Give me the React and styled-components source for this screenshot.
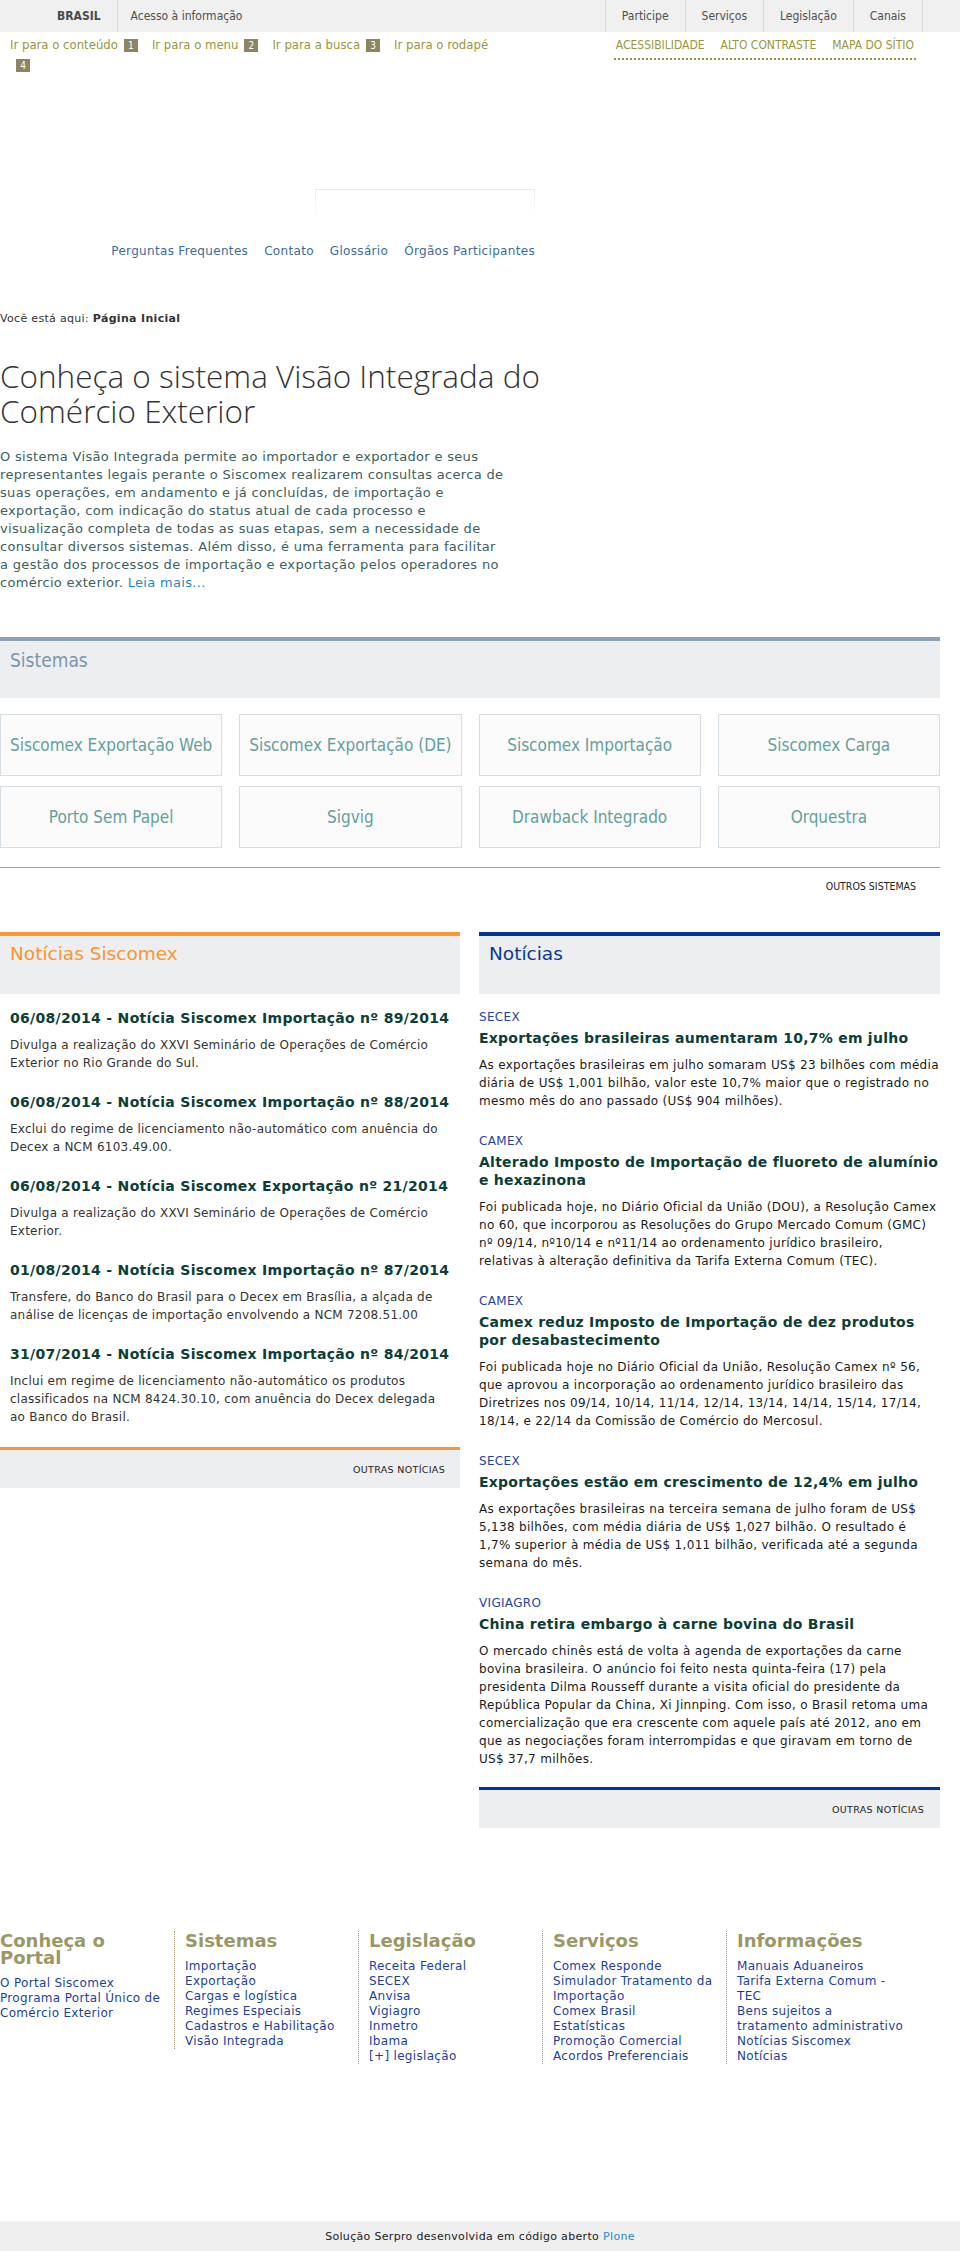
import React from 'react';
import styled, { createGlobalStyle } from 'styled-components';

const narrow = `"Liberation Sans Narrow", "DejaVu Sans Condensed", "Arial Narrow", sans-serif`;
const sans = `"DejaVu Sans", Verdana, sans-serif`;

const GlobalStyle = createGlobalStyle`
  html, body {
    margin: 0;
    padding: 0;
  }
  body {
    font-family: ${sans};
    letter-spacing: 0.02em;
    color: #333;
    background: #fff;
  }
  a {
    text-decoration: none;
  }
`;

const Page = styled.div`
  min-height: 100vh;
  display: flex;
  flex-direction: column;
`;

// barra do governo
const TopBar = styled.div`
  background: #f0f0f0;
  height: 32px;
  display: flex;
  justify-content: space-between;
  padding: 0 37px 0 41px;
  font-family: ${narrow};
  font-size: 12px;
  letter-spacing: 0;
`;

const BarGroup = styled.div`
  display: flex;
`;

const BarItem = styled.a`
  display: flex;
  align-items: center;
  padding: 0 ${(p) => p.$pad || 16}px;
  color: ${(p) => (p.$bold ? '#4a4a4a' : '#4f4f4f')};
  font-weight: ${(p) => (p.$bold ? 'bold' : 'normal')};
  border-left: ${(p) => (p.$sep ? '1px solid #dadada' : '0')};
  border-right: ${(p) => (p.$end ? '1px solid #dadada' : '0')};
`;

const Container = styled.div`
  width: 940px;
`;

const SkipRow = styled.div`
  height: 44px;
  display: flex;
  justify-content: space-between;
  align-items: flex-start;
  padding: 3px 24px 0 10px;
  box-sizing: border-box;
  font-family: ${narrow};
  letter-spacing: 0;
`;

const SkipLinks = styled.div`
  max-width: 490px;
  font-size: 13px;
  line-height: 20px;
`;

const SkipLink = styled.a`
  color: #96963c;
`;

const SkipNum = styled.span`
  display: inline-block;
  width: 14px;
  height: 13px;
  line-height: 13px;
  margin: 0 14px 0 6px;
  background: #8e8461;
  color: #fff;
  font-size: 10px;
  text-align: center;
  vertical-align: middle;
`;

const AccessLinks = styled.div`
  display: flex;
  gap: 16px;
  padding: 2px 2px 5px;
  border-bottom: 2px dotted #96963c;
  font-size: 12px;
  line-height: 16px;
`;

const AccessLink = styled.a`
  color: #96963c;
`;

const Header = styled.div`
  width: 535px;
  padding-top: 113px;
  display: flex;
  flex-direction: column;
  align-items: flex-end;
`;

const SearchBox = styled.div`
  width: 218px;
  height: 24px;
  border: 1px solid;
  border-bottom: 0;
  border-image: linear-gradient(#e9e9e9, #ffffff) 1;
`;

const HeaderNav = styled.nav`
  margin-top: 29px;
  display: flex;
  gap: 16px;
  font-size: 12px;
  line-height: 16px;
`;

const HeaderLink = styled.a`
  color: #3b6aa0;
`;

const Breadcrumb = styled.div`
  margin-top: 52px;
  font-size: 11px;
  line-height: 16px;
  color: #333;

  strong {
    font-weight: bold;
  }
`;

const Intro = styled.section`
  width: 560px;
`;

const Title = styled.h1`
  margin: 31px 0 0;
  font-family: "Open Sans", "Lato", sans-serif;
  font-weight: 300;
  font-size: 31.5px;
  line-height: 35px;
  letter-spacing: 0;
  color: #333;
`;

const Lead = styled.p`
  width: 505px;
  margin: 20px 0 0;
  font-size: 13px;
  line-height: 18px;
  color: #3b605e;

  a {
    color: #1f87c9;
  }
`;

const Systems = styled.section`
  margin-top: 45px;
`;

const PanelHead = styled.div`
  border-top: 4px solid ${(p) => p.$color};
  background: #eceef0;
  height: ${(p) => p.$h || 57}px;
  padding: 0 10px;
`;

const PanelTitle = styled.h2`
  margin: 0;
  padding-top: ${(p) => p.$top || 8}px;
  font-family: ${(p) => (p.$narrow ? narrow : sans)};
  font-weight: normal;
  font-size: ${(p) => p.$size || 18.5}px;
  line-height: 22px;
  letter-spacing: 0;
  color: ${(p) => p.$color};
`;

const SystemGrid = styled.div`
  margin-top: 16px;
  display: grid;
  grid-template-columns: repeat(4, 1fr);
  column-gap: 17px;
  row-gap: 10px;
`;

const SystemBox = styled.a`
  height: 62px;
  box-sizing: border-box;
  border: 1px solid #d6dde2;
  background: #fafafa;
  display: flex;
  align-items: center;
  justify-content: center;
  font-family: ${narrow};
  font-size: 17px;
  letter-spacing: 0;
  color: #64a09c;
  white-space: nowrap;
`;

const SystemsFoot = styled.div`
  margin-top: 19px;
  border-top: 1px solid #8aa2b8;
  padding: 10px 24px 0 0;
  text-align: right;
  font-family: ${narrow};
  font-size: 10.5px;
  line-height: 16px;
  letter-spacing: 0;
`;

const MoreLink = styled.a`
  color: #222;
  text-transform: uppercase;
`;

const NewsRow = styled.div`
  margin-top: 38px;
  display: flex;
  align-items: flex-start;
  justify-content: space-between;
`;

const NewsCol = styled.section`
  width: ${(p) => p.$w}px;
`;

const NewsList = styled.div`
  padding: ${(p) => p.$top || 14}px ${(p) => p.$padX || 0}px 0;
  display: flex;
  flex-direction: column;
  gap: ${(p) => p.$gap}px;
`;

const NewsTitle = styled.a`
  display: block;
  font-weight: bold;
  font-size: 14px;
  line-height: ${(p) => p.$lh || 20}px;
  letter-spacing: ${(p) => p.$ls || 0.3}px;
  color: #0c3d37;
  margin-top: ${(p) => p.$mt || 0}px;
`;

const NewsDesc = styled.p`
  margin: ${(p) => p.$mt || 8}px 0 0;
  font-size: 12px;
  line-height: 18px;
  letter-spacing: ${(p) => p.$ls || 0.24}px;
  color: ${(p) => p.$color || '#333'};
`;

const Category = styled.a`
  display: block;
  margin-top: 3px;
  font-size: 12px;
  line-height: 16px;
  color: #1e44a6;
`;

const PanelFoot = styled.div`
  margin-top: ${(p) => p.$mt}px;
  border-top: 3px solid ${(p) => p.$color};
  background: #eceef0;
  height: 38px;
  display: flex;
  align-items: center;
  justify-content: flex-end;
  padding-right: ${(p) => p.$pr}px;
  font-size: 9.5px;
`;

const Footer = styled.footer`
  margin-top: 103px;
  display: grid;
  grid-template-columns: 174px repeat(4, 184px);
  align-items: start;
`;

const FooterCol = styled.div`
  padding: 1px ${(p) => (p.$first ? 8 : 4)}px 0 ${(p) => (p.$first ? 0 : 10)}px;
  border-left: ${(p) => (p.$first ? '0' : '1px dotted #9a9470')};
`;

const FooterTitle = styled.h3`
  margin: 0 0 10px;
  font-size: 18px;
  line-height: 17px;
  font-weight: bold;
  letter-spacing: 0;
  color: #9a9866;
`;

const FooterLink = styled.a`
  display: block;
  font-size: 12px;
  line-height: 15px;
  color: #1b3f9e;
`;

const BottomBar = styled.div`
  margin-top: auto;
  background: #efefef;
  height: 30px;
  display: flex;
  align-items: center;
  justify-content: center;
  font-size: 11px;
  color: #222;

  a {
    color: #1e8bd0;
    margin-left: 4px;
  }
`;

const skipLinks = ['Ir para o conteúdo', 'Ir para o menu', 'Ir para a busca', 'Ir para o rodapé'];

const systems = [
  'Siscomex Exportação Web',
  'Siscomex Exportação (DE)',
  'Siscomex Importação',
  'Siscomex Carga',
  'Porto Sem Papel',
  'Sigvig',
  'Drawback Integrado',
  'Orquestra',
];

const siscomexNews = [
  {
    title: '06/08/2014 - Notícia Siscomex Importação nº 89/2014',
    text: 'Divulga a realização do XXVI Seminário de Operações de Comércio Exterior no Rio Grande do Sul.',
  },
  {
    title: '06/08/2014 - Notícia Siscomex Importação nº 88/2014',
    text: 'Exclui do regime de licenciamento não-automático com anuência do Decex a NCM 6103.49.00.',
  },
  {
    title: '06/08/2014 - Notícia Siscomex Exportação nº 21/2014',
    text: 'Divulga a realização do XXVI Seminário de Operações de Comércio Exterior.',
  },
  {
    title: '01/08/2014 - Notícia Siscomex Importação nº 87/2014',
    text: 'Transfere, do Banco do Brasil para o Decex em Brasília, a alçada de análise de licenças de importação envolvendo a NCM 7208.51.00',
  },
  {
    title: '31/07/2014 - Notícia Siscomex Importação nº 84/2014',
    text: 'Inclui em regime de licenciamento não-automático os produtos classificados na NCM 8424.30.10, com anuência do Decex delegada ao Banco do Brasil.',
  },
];

const news = [
  {
    cat: 'SECEX',
    title: 'Exportações brasileiras aumentaram 10,7% em julho',
    text: 'As exportações brasileiras em julho somaram US$ 23 bilhões com média diária de US$ 1,001 bilhão, valor este 10,7% maior que o registrado no mesmo mês do ano passado (US$ 904 milhões).',
  },
  {
    cat: 'CAMEX',
    title: 'Alterado Imposto de Importação de fluoreto de alumínio e hexazinona',
    text: 'Foi publicada hoje, no Diário Oficial da União (DOU), a Resolução Camex no 60, que incorporou as Resoluções do Grupo Mercado Comum (GMC) nº 09/14, nº10/14 e nº11/14 ao ordenamento jurídico brasileiro, relativas à alteração definitiva da Tarifa Externa Comum (TEC).',
  },
  {
    cat: 'CAMEX',
    title: 'Camex reduz Imposto de Importação de dez produtos por desabastecimento',
    text: 'Foi publicada hoje no Diário Oficial da União, Resolução Camex nº 56, que aprovou a incorporação ao ordenamento jurídico brasileiro das Diretrizes nos 09/14, 10/14, 11/14, 12/14, 13/14, 14/14, 15/14, 17/14, 18/14, e 22/14 da Comissão de Comércio do Mercosul.',
  },
  {
    cat: 'SECEX',
    title: 'Exportações estão em crescimento de 12,4% em julho',
    text: 'As exportações brasileiras na terceira semana de julho foram de US$ 5,138 bilhões, com média diária de US$ 1,027 bilhão. O resultado é 1,7% superior à média de US$ 1,011 bilhão, verificada até a segunda semana do mês.',
  },
  {
    cat: 'VIGIAGRO',
    title: 'China retira embargo à carne bovina do Brasil',
    text: 'O mercado chinês está de volta à agenda de exportações da carne bovina brasileira. O anúncio foi feito nesta quinta-feira (17) pela presidenta Dilma Rousseff durante a visita oficial do presidente da República Popular da China, Xi Jinnping. Com isso, o Brasil retoma uma comercialização que era crescente com aquele país até 2012, ano em que as negociações foram interrompidas e que giravam em torno de US$ 37,7 milhões.',
  },
];

const footerCols = [
  { title: 'Conheça o Portal', links: ['O Portal Siscomex', 'Programa Portal Único de Comércio Exterior'] },
  {
    title: 'Sistemas',
    links: ['Importação', 'Exportação', 'Cargas e logística', 'Regimes Especiais', 'Cadastros e Habilitação', 'Visão Integrada'],
  },
  {
    title: 'Legislação',
    links: ['Receita Federal', 'SECEX', 'Anvisa', 'Vigiagro', 'Inmetro', 'Ibama', '[+] legislação'],
  },
  {
    title: 'Serviços',
    links: [
      'Comex Responde',
      'Simulador Tratamento da Importação',
      'Comex Brasil',
      'Estatísticas',
      'Promoção Comercial',
      'Acordos Preferenciais',
    ],
  },
  {
    title: 'Informações',
    links: [
      'Manuais Aduaneiros',
      'Tarifa Externa Comum - TEC',
      'Bens sujeitos a tratamento administrativo',
      'Notícias Siscomex',
      'Notícias',
    ],
  },
];

export default function App() {
  return (
    <Page>
      <GlobalStyle />
      <TopBar>
        <BarGroup>
          <BarItem $bold $pad={16} $end href="#">BRASIL</BarItem>
          <BarItem $pad={13} href="#">Acesso à informação</BarItem>
        </BarGroup>
        <BarGroup>
          <BarItem $sep href="#">Participe</BarItem>
          <BarItem $sep href="#">Serviços</BarItem>
          <BarItem $sep href="#">Legislação</BarItem>
          <BarItem $sep $end href="#">Canais</BarItem>
        </BarGroup>
      </TopBar>

      <Container>
        <SkipRow>
          <SkipLinks>
            {skipLinks.map((label, i) => (
              <React.Fragment key={label}>
                <SkipLink href="#">{label}</SkipLink>
                <SkipNum>{i + 1}</SkipNum>
              </React.Fragment>
            ))}
          </SkipLinks>
          <AccessLinks>
            <AccessLink href="#">ACESSIBILIDADE</AccessLink>
            <AccessLink href="#">ALTO CONTRASTE</AccessLink>
            <AccessLink href="#">MAPA DO SÍTIO</AccessLink>
          </AccessLinks>
        </SkipRow>

        <Header>
          <SearchBox />
          <HeaderNav>
            <HeaderLink href="#">Perguntas Frequentes</HeaderLink>
            <HeaderLink href="#">Contato</HeaderLink>
            <HeaderLink href="#">Glossário</HeaderLink>
            <HeaderLink href="#">Órgãos Participantes</HeaderLink>
          </HeaderNav>
        </Header>

        <Breadcrumb>
          Você está aqui: <strong>Página Inicial</strong>
        </Breadcrumb>

        <Intro>
          <Title>Conheça o sistema Visão Integrada do Comércio Exterior</Title>
          <Lead>
            O sistema Visão Integrada permite ao importador e exportador e seus representantes legais perante o
            Siscomex realizarem consultas acerca de suas operações, em andamento e já concluídas, de importação e
            exportação, com indicação do status atual de cada processo e visualização completa de todas as suas
            etapas, sem a necessidade de consultar diversos sistemas. Além disso, é uma ferramenta para facilitar a
            gestão dos processos de importação e exportação pelos operadores no comércio exterior.{' '}
            <a href="#">Leia mais...</a>
          </Lead>
        </Intro>

        <Systems>
          <PanelHead $color="#8aa2b8">
            <PanelTitle $narrow $size={19} $color="#7a96ad">Sistemas</PanelTitle>
          </PanelHead>
          <SystemGrid>
            {systems.map((name) => (
              <SystemBox key={name} href="#">{name}</SystemBox>
            ))}
          </SystemGrid>
          <SystemsFoot>
            <MoreLink href="#">Outros sistemas</MoreLink>
          </SystemsFoot>
        </Systems>

        <NewsRow>
          <NewsCol $w={460}>
            <PanelHead $color="#fc9834" $h={58}>
              <PanelTitle $top={7} $color="#f9952e">Notícias Siscomex</PanelTitle>
            </PanelHead>
            <NewsList $gap={20} $padX={10}>
              {siscomexNews.map((item) => (
                <article key={item.title}>
                  <NewsTitle href="#">{item.title}</NewsTitle>
                  <NewsDesc>{item.text}</NewsDesc>
                </article>
              ))}
            </NewsList>
            <PanelFoot $mt={21} $pr={15} $color="#fc9834">
              <MoreLink href="#">Outras notícias</MoreLink>
            </PanelFoot>
          </NewsCol>

          <NewsCol $w={461}>
            <PanelHead $color="#03339a" $h={58}>
              <PanelTitle $top={7} $color="#0a3a92">Notícias</PanelTitle>
            </PanelHead>
            <NewsList $gap={20} $top={12}>
              {news.map((item) => (
                <article key={item.title}>
                  <Category href="#">{item.cat}</Category>
                  <NewsTitle $lh={18} $mt={4} $ls={0.25} href="#">{item.title}</NewsTitle>
                  <NewsDesc $mt={9} $ls={0.313} $color="#1a1a1a">{item.text}</NewsDesc>
                </article>
              ))}
            </NewsList>
            <PanelFoot $mt={19} $pr={16} $color="#03339a">
              <MoreLink href="#">Outras notícias</MoreLink>
            </PanelFoot>
          </NewsCol>
        </NewsRow>

        <Footer>
          {footerCols.map((col, i) => (
            <FooterCol key={col.title} $first={i === 0}>
              <FooterTitle>{col.title}</FooterTitle>
              {col.links.map((link) => (
                <FooterLink key={link} href="#">{link}</FooterLink>
              ))}
            </FooterCol>
          ))}
        </Footer>
      </Container>

      <BottomBar>
        Solução Serpro desenvolvida em código aberto <a href="#">Plone</a>
      </BottomBar>
    </Page>
  );
}
